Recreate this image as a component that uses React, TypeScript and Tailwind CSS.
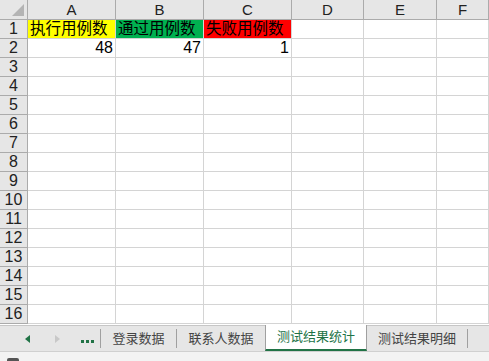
import React from 'react';

const cols = ['A', 'B', 'C', 'D', 'E', 'F'];
const rows = Array.from({ length: 16 }, (_, i) => i + 1);

const font = { fontFamily: '"Liberation Sans", "Noto Sans CJK SC", sans-serif' };

function Cell({ r, c }: { r: number; c: number }) {
  let cls = 'h-[19px] border-r border-b border-[#d4d4d4] overflow-visible whitespace-nowrap leading-[18px] px-[2px]';
  let text = '';
  if (r === 1 && c === 0) {
    cls += ' bg-[#ffff00] text-[15.5px]';
    text = '执行用例数';
  } else if (r === 1 && c === 1) {
    cls += ' bg-[#00b050] text-[15.5px]';
    text = '通过用例数';
  } else if (r === 1 && c === 2) {
    cls += ' bg-[#ff0000] text-[15.5px]';
    text = '失败用例数';
  } else if (r === 2 && c < 3) {
    cls += ' text-right text-[16px]';
    text = ['48', '47', '1'][c];
  }
  return <div className={cls}>{text}</div>;
}

export default function App() {
  return (
    <div className="w-[489px] h-[361px] overflow-hidden bg-white text-black flex flex-col" style={font}>
      <div className="grid grid-cols-[28px_88px_88px_88px_72px_73px_1fr]">
        <div className="h-[20px] bg-[#e6e6e6] border-r border-b border-[#ababab] flex items-end justify-end p-[3px]">
          <div className="w-0 h-0 border-l-[12px] border-l-transparent border-b-[12px] border-b-[#b4b4b4]" />
        </div>
        {cols.map((c) => (
          <div
            key={c}
            className="h-[20px] bg-[#e6e6e6] border-r border-b border-[#ababab] text-[15px] leading-[19px] text-center text-[#222]"
          >
            {c}
          </div>
        ))}
        {rows.map((r) => (
          <React.Fragment key={r}>
            <div className="h-[19px] bg-[#e6e6e6] border-r border-b border-[#ababab] text-[16px] leading-[18px] text-center text-[#222]">
              {r}
            </div>
            {cols.map((_, c) => (
              <Cell key={c} r={r} c={c} />
            ))}
          </React.Fragment>
        ))}
      </div>
      <div className="h-[26px] mt-[1px] bg-[#e6e6e6] border-t border-[#c6c6c6] flex items-stretch text-[13px]">
        <div className="w-[100px] flex items-center">
          <span className="ml-[25px] w-0 h-0 border-y-[4px] border-y-transparent border-r-[5px] border-r-[#217346]" />
          <span className="ml-[25px] w-0 h-0 border-y-[4px] border-y-transparent border-l-[5px] border-l-[#c8c8c8]" />
          <span className="ml-[21px] flex gap-[2px] mt-[6px]">
            <span className="w-[3px] h-[3px] bg-[#217346]" />
            <span className="w-[3px] h-[3px] bg-[#217346]" />
            <span className="w-[3px] h-[3px] bg-[#217346]" />
          </span>
        </div>
        <div className="w-px my-[3px] bg-[#a0a0a0]" />
        <div className="w-[75px] flex items-center justify-center text-[#444]">登录数据</div>
        <div className="w-px my-[3px] bg-[#a0a0a0]" />
        <div className="w-[88px] flex items-center justify-center text-[#444]">联系人数据</div>
        <div className="w-[102px] bg-white border-x border-[#a0a0a0] border-b-[2px] border-b-[#217346] -mt-px flex items-center justify-center text-[#217346]">
          测试结果统计
        </div>
        <div className="w-[100px] flex items-center justify-center text-[#444]">测试结果明细</div>
        <div className="w-px my-[3px] bg-[#a0a0a0]" />
      </div>
      <div className="flex-1 bg-[#f3f3f3] border-t border-[#d0d0d0] relative">
        <div className="absolute left-[7px] top-[6px] w-[12px] h-[6px] bg-[#555] rounded-t-[2px]" />
      </div>
    </div>
  );
}
